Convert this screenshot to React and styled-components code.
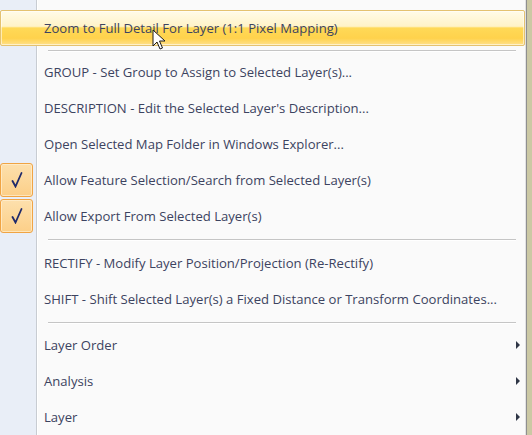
import React from "react";
import styled, { createGlobalStyle, css } from "styled-components";

const Global = createGlobalStyle`
  html, body { margin: 0; padding: 0; }
  body {
    background: #cbc8a4;
    font-family: "Open Sans", "Noto Sans", sans-serif;
    overflow: hidden;
  }
`;

const Menu = styled.div`
  position: relative;
  width: 527px;
  height: 435px;
  box-sizing: border-box;
  border-right: 1px solid #8f8f8f;
  box-shadow: inset -1px 0 0 #e2e2e2;
  background: linear-gradient(
    to right,
    #e9eef7 0 36px,
    #c8ccd2 36px 37px,
    #ffffff 37px 38px,
    #fafafa 38px
  );
  display: flex;
  flex-direction: column;
  padding-top: 10px;
  overflow: hidden;
`;

const Row = styled.div`
  position: relative;
  height: 36px;
  flex: none;
  display: flex;
  align-items: center;
  box-sizing: border-box;
  color: #3c4360;
  font-size: 13.1px;
  ${(p) =>
    p.$hot &&
    css`
      margin-right: 1px;
      border: 1px solid #e4c270;
      border-radius: 2px;
      background: linear-gradient(
        to bottom,
        #fffbe8 0%,
        #fff3c8 45%,
        #ffd957 50%,
        #ffd24c 80%,
        #ffe08a 100%
      );
      box-shadow: inset 0 0 0 1px rgba(255, 255, 255, 0.55);
    `}
`;

const IconCell = styled.div`
  width: 36px;
  height: 36px;
  flex: none;
  display: flex;
  align-items: center;
  justify-content: flex-start;
  margin-left: ${(p) => (p.$hot ? "-1px" : "0")};
`;

const CheckBox = styled.div`
  width: 33px;
  height: 34px;
  box-sizing: border-box;
  border: 1px solid #f0a444;
  border-radius: 3px;
  background: linear-gradient(to bottom, #fde0ad, #fccf88);
  box-shadow: inset 0 0 0 1px rgba(255, 240, 210, 0.7);
  display: flex;
  align-items: center;
  justify-content: center;
`;

const Label = styled.span`
  margin-left: 8px;
  white-space: nowrap;
  flex: 1;
`;

const Arrow = styled.span`
  width: 0;
  height: 0;
  margin-right: 6px;
  border-top: 4px solid transparent;
  border-bottom: 4px solid transparent;
  border-left: 4px solid #2f3646;
`;

const Separator = styled.div`
  height: ${(p) => p.$h}px;
  flex: none;
  display: flex;
  align-items: center;
  padding-left: 48px;
  padding-right: 10px;
  &::after {
    content: "";
    flex: 1;
    height: 1px;
    background: #c5c5c5;
    box-shadow: 0 1px 0 #ffffff;
  }
`;

const Cursor = styled.svg`
  position: absolute;
  left: 151px;
  top: 18px;
  width: 14px;
  height: 22px;
  pointer-events: none;
`;

function Check() {
  return (
    <svg width="12" height="16" viewBox="0 0 12 16">
      <path
        d="M1.5 9 L4.5 14.5 L10.5 1"
        fill="none"
        stroke="#1f2a6b"
        strokeWidth="1.8"
        strokeLinejoin="miter"
        strokeLinecap="round"
      />
    </svg>
  );
}

function Item({ label, hot, checked, sub, children }) {
  return (
    <Row $hot={hot}>
      <IconCell $hot={hot}>
        {checked && (
          <CheckBox>
            <Check />
          </CheckBox>
        )}
      </IconCell>
      <Label>{label}</Label>
      {sub && <Arrow />}
      {children}
    </Row>
  );
}

export default function App() {
  return (
    <>
      <Global />
      <Menu>
        <Item hot label="Zoom to Full Detail For Layer (1:1 Pixel Mapping)">
          <Cursor viewBox="0 0 14 22">
            <path
              d="M1 1 L1 17 L5 13 L8 20 L10.5 19 L7.5 12 L13 12 Z"
              fill="#ffffff"
              stroke="#1a1a1a"
              strokeWidth="1"
              strokeLinejoin="round"
            />
          </Cursor>
        </Item>
        <Separator $h={8} />
        <Item label="GROUP - Set Group to Assign to Selected Layer(s)..." />
        <Item label="DESCRIPTION - Edit the Selected Layer's Description..." />
        <Item label="Open Selected Map Folder in Windows Explorer..." />
        <Item checked label="Allow Feature Selection/Search from Selected Layer(s)" />
        <Item checked label="Allow Export From Selected Layer(s)" />
        <Separator $h={11} />
        <Item label="RECTIFY - Modify Layer Position/Projection (Re-Rectify)" />
        <Item label="SHIFT - Shift Selected Layer(s) a Fixed Distance or Transform Coordinates..." />
        <Separator $h={10} />
        <Item sub label="Layer Order" />
        <Item sub label="Analysis" />
        <Item sub label="Layer" />
      </Menu>
    </>
  );
}
